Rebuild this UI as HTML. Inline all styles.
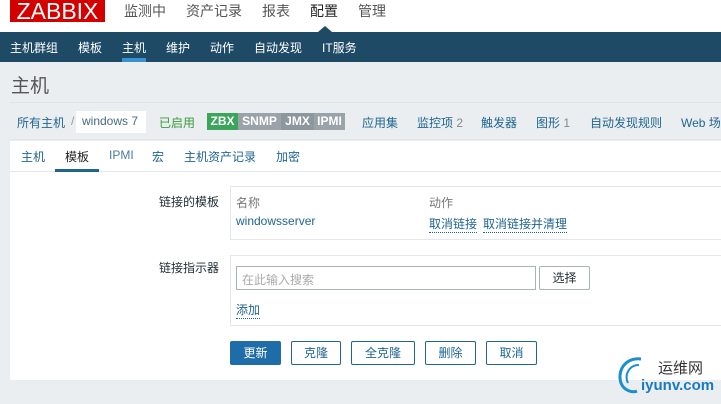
<!DOCTYPE html>
<html><head><meta charset="utf-8"><style>
*{margin:0;padding:0;box-sizing:border-box}
body{width:721px;height:404px;overflow:hidden;background:#ebeef0;font-family:"Liberation Sans","Noto Sans CJK SC",sans-serif;font-size:12px;color:#1f2c33;position:relative}
.a{position:absolute;white-space:nowrap}
.top{position:absolute;left:0;top:0;width:721px;height:32px;background:#fff}
.logo{position:absolute;left:10px;top:0;width:95px;height:22px;background:#d40000;color:#fff;font-size:23px;line-height:22px;text-align:center;letter-spacing:0px;overflow:hidden}
.nav{position:absolute;left:0;top:32px;width:721px;height:30px;background:#1f4a66}
.nav span{position:absolute;top:7px;color:#fff;font-size:12px}
.lnk{color:#1f6590}
.btn{position:absolute;top:341px;height:24px;border:1px solid #1f6590;background:#fff;color:#1f6590;border-radius:2px;text-align:center;line-height:22px;font-size:12px}
</style></head><body>
<div class="top"></div>
<div class="logo">ZABBIX</div>
<div class="a" style="left:124px;top:1px;font-size:14px;color:#555">监测中</div>
<div class="a" style="left:186px;top:1px;font-size:14px;color:#555">资产记录</div>
<div class="a" style="left:262px;top:1px;font-size:14px;color:#555">报表</div>
<div class="a" style="left:310px;top:1px;font-size:14px;color:#222">配置</div>
<div class="a" style="left:358px;top:1px;font-size:14px;color:#555">管理</div>
<div class="a" style="left:318px;top:26px;width:0;height:0;border-left:7px solid transparent;border-right:7px solid transparent;border-bottom:6px solid #1f4a66"></div>
<div class="nav">
<span style="left:10px">主机群组</span><span style="left:78px">模板</span><span style="left:122px">主机</span><span style="left:166px">维护</span><span style="left:210px">动作</span><span style="left:254px">自动发现</span><span style="left:322px">IT服务</span>
<div class="a" style="left:122px;top:26px;width:24px;height:4px;background:#3891d0"></div>
</div>
<div class="a" style="left:11px;top:71px;font-size:19px;color:#555">主机</div>
<div class="a" style="left:10px;top:102px;width:711px;height:1px;background:#dfe4e7"></div>
<div class="a" style="left:10px;top:139px;width:711px;height:1px;background:#dfe4e7"></div>
<div class="a lnk" style="left:17px;top:114px">所有主机</div>
<div class="a" style="left:71px;top:114px;color:#999">/</div>
<div class="a" style="left:76px;top:111px;width:70px;height:22px;background:#fff"></div>
<div class="a" style="left:82px;top:114px;color:#4a6b80">windows 7</div>
<div class="a" style="left:159px;top:114px;color:#3a9a3a">已启用</div>
<div class="a" style="left:207px;top:113px;width:31px;height:17px;background:#3ba55c;color:#fff;font-weight:bold;text-align:center;line-height:17px">ZBX</div>
<div class="a" style="left:238px;top:113px;width:43px;height:17px;background:#9aa3aa;color:#fff;font-weight:bold;text-align:center;line-height:17px">SNMP</div>
<div class="a" style="left:281px;top:113px;width:33px;height:17px;background:#8d979e;color:#fff;font-weight:bold;text-align:center;line-height:17px">JMX</div>
<div class="a" style="left:314px;top:113px;width:31px;height:17px;background:#9aa3aa;color:#fff;font-weight:bold;text-align:center;line-height:17px">IPMI</div>
<div class="a lnk" style="left:362px;top:114px">应用集</div>
<div class="a lnk" style="left:417px;top:114px">监控项 <span style="color:#888">2</span></div>
<div class="a lnk" style="left:481px;top:114px">触发器</div>
<div class="a lnk" style="left:536px;top:114px">图形 <span style="color:#888">1</span></div>
<div class="a lnk" style="left:590px;top:114px">自动发现规则</div>
<div class="a lnk" style="left:681px;top:114px">Web 场</div>
<div class="a" style="left:10px;top:141px;width:711px;height:239px;background:#fff"></div>
<div class="a" style="left:10px;top:171px;width:711px;height:1px;background:#e3e7ea"></div>
<div class="a lnk" style="left:21px;top:148px">主机</div>
<div class="a" style="left:65px;top:148px;color:#222">模板</div>
<div class="a" style="left:55px;top:169px;width:44px;height:3px;background:#1f6590"></div>
<div class="a" style="left:109px;top:148px;color:#4a7aa0">IPMI</div>
<div class="a lnk" style="left:152px;top:148px">宏</div>
<div class="a lnk" style="left:184px;top:148px">主机资产记录</div>
<div class="a lnk" style="left:276px;top:148px">加密</div>
<div class="a" style="left:159px;top:193px">链接的模板</div>
<div class="a" style="left:230px;top:186px;width:491px;height:54px;border:1px solid #e5e8ea;border-right:none"></div>
<div class="a" style="left:236px;top:194px;color:#777">名称</div>
<div class="a" style="left:429px;top:194px;color:#777">动作</div>
<div class="a lnk" style="left:236px;top:214px">windowsserver</div>
<div class="a lnk" style="left:429px;top:215px;border-bottom:1px dotted #1f6590">取消链接</div>
<div class="a lnk" style="left:483px;top:215px;border-bottom:1px dotted #1f6590">取消链接并清理</div>
<div class="a" style="left:159px;top:259px">链接指示器</div>
<div class="a" style="left:230px;top:255px;width:491px;height:71px;border:1px solid #e5e8ea;border-right:none"></div>
<div class="a" style="left:236px;top:266px;width:300px;height:24px;border:1px solid #aab3b8;color:#aaa;padding:4px 5px">在此输入搜索</div>
<div class="a" style="left:539px;top:266px;width:51px;height:24px;border:1px solid #aab3b8;border-radius:2px;text-align:center;line-height:22px">选择</div>
<div class="a lnk" style="left:236px;top:301px;border-bottom:1px dotted #1f6590">添加</div>
<div class="btn" style="left:230px;width:51px;background:#1e6da8;border-color:#1e6da8;color:#fff">更新</div>
<div class="btn" style="left:291px;width:50px">克隆</div>
<div class="btn" style="left:351px;width:64px">全克隆</div>
<div class="btn" style="left:425px;width:51px">删除</div>
<div class="btn" style="left:486px;width:51px">取消</div>
<svg class="a" style="left:615px;top:355px" width="30" height="40" viewBox="0 0 30 40"><path d="M26 4 C10 2 2 16 6 28 C9 36 18 38 22 36" fill="none" stroke="#1a8fd0" stroke-width="3"/><path d="M24 10 C14 10 9 20 13 28" fill="none" stroke="#1a8fd0" stroke-width="2"/></svg>
<div class="a" style="left:658px;top:357px;font-size:15px;color:#333">运维网</div>
<div class="a" style="left:641px;top:377px;font-size:15px;font-weight:bold;color:#1a7ac0">iyunv.com</div>
</body></html>
